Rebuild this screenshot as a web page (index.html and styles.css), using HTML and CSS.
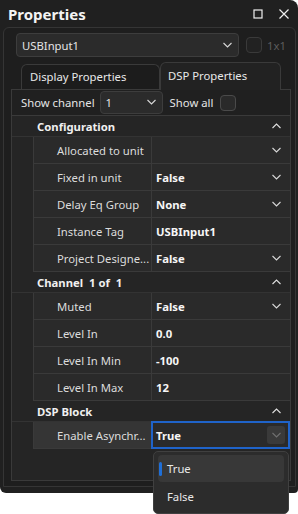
FILE: index.html
```html
<!DOCTYPE html>
<html lang="en">
<head>
    <meta charset="UTF-8">
    <title>Properties</title>
    <link rel="stylesheet" href="styles.css">
</head>
<body>
    <div class="window">
        <div class="titlebar">
            <span class="title">Properties</span>
            <svg class="win-btn" width="10" height="10" viewBox="0 0 10 10"><rect x="1" y="1" width="8" height="8" fill="none" stroke="#f0f0f0" stroke-width="1.2"/></svg>
            <svg class="win-btn close" width="12" height="12" viewBox="0 0 12 12"><path d="M1.5 1.5 L10.5 10.5 M10.5 1.5 L1.5 10.5" stroke="#f0f0f0" stroke-width="1.2"/></svg>
        </div>
        <div class="panel">
            <div class="top-row">
                <div class="combo">
                    <span>USBInput1</span>
                    <svg class="chev" width="9" height="6" viewBox="0 0 9 6"><path d="M0.5 1 L4.5 5 L8.5 1" fill="none" stroke="#d8d8d8" stroke-width="1.1"/></svg>
                </div>
                <div class="check disabled"></div>
                <span class="dim">1x1</span>
            </div>
            <div class="tabs">
                <div class="tab">Display Properties</div>
                <div class="tab active">DSP Properties</div>
            </div>
            <div class="tab-body">
                <div class="show-row">
                    <span>Show channel</span>
                    <div class="combo small">
                        <span>1</span>
                        <svg class="chev" width="9" height="6" viewBox="0 0 9 6"><path d="M0.5 1 L4.5 5 L8.5 1" fill="none" stroke="#d8d8d8" stroke-width="1.1"/></svg>
                    </div>
                    <span>Show all</span>
                    <div class="check"></div>
                </div>
                <div class="grid">
                    <div class="cat">
                        <span>Configuration</span>
                        <svg class="chev" width="9" height="6" viewBox="0 0 9 6"><path d="M0.5 5 L4.5 1 L8.5 5" fill="none" stroke="#e0e0e0" stroke-width="1.1"/></svg>
                    </div>
                    <div class="prop"><div class="name">Allocated to unit</div><div class="val"><span></span><svg class="chev" width="9" height="6" viewBox="0 0 9 6"><path d="M0.5 1 L4.5 5 L8.5 1" fill="none" stroke="#d8d8d8" stroke-width="1.1"/></svg></div></div>
                    <div class="prop"><div class="name">Fixed in unit</div><div class="val"><span>False</span><svg class="chev" width="9" height="6" viewBox="0 0 9 6"><path d="M0.5 1 L4.5 5 L8.5 1" fill="none" stroke="#d8d8d8" stroke-width="1.1"/></svg></div></div>
                    <div class="prop"><div class="name">Delay Eq Group</div><div class="val"><span>None</span><svg class="chev" width="9" height="6" viewBox="0 0 9 6"><path d="M0.5 1 L4.5 5 L8.5 1" fill="none" stroke="#d8d8d8" stroke-width="1.1"/></svg></div></div>
                    <div class="prop"><div class="name">Instance Tag</div><div class="val"><span>USBInput1</span></div></div>
                    <div class="prop"><div class="name">Project Designe...</div><div class="val"><span>False</span><svg class="chev" width="9" height="6" viewBox="0 0 9 6"><path d="M0.5 1 L4.5 5 L8.5 1" fill="none" stroke="#d8d8d8" stroke-width="1.1"/></svg></div></div>
                    <div class="cat">
                        <span>Channel&nbsp;&nbsp;1 of&nbsp;&nbsp;1</span>
                        <svg class="chev" width="9" height="6" viewBox="0 0 9 6"><path d="M0.5 5 L4.5 1 L8.5 5" fill="none" stroke="#e0e0e0" stroke-width="1.1"/></svg>
                    </div>
                    <div class="prop"><div class="name">Muted</div><div class="val"><span>False</span><svg class="chev" width="9" height="6" viewBox="0 0 9 6"><path d="M0.5 1 L4.5 5 L8.5 1" fill="none" stroke="#d8d8d8" stroke-width="1.1"/></svg></div></div>
                    <div class="prop"><div class="name">Level In</div><div class="val"><span>0.0</span></div></div>
                    <div class="prop"><div class="name">Level In Min</div><div class="val"><span>-100</span></div></div>
                    <div class="prop"><div class="name">Level In Max</div><div class="val"><span>12</span></div></div>
                    <div class="cat">
                        <span>DSP Block</span>
                        <svg class="chev" width="9" height="6" viewBox="0 0 9 6"><path d="M0.5 5 L4.5 1 L8.5 5" fill="none" stroke="#e0e0e0" stroke-width="1.1"/></svg>
                    </div>
                    <div class="prop selected"><div class="name">Enable Asynchr...</div><div class="val editing"><span>True</span><div class="drop-btn"><svg width="9" height="6" viewBox="0 0 9 6"><path d="M0.5 1 L4.5 5 L8.5 1" fill="none" stroke="#707070" stroke-width="1.1"/></svg></div></div></div>
                    <div class="filler"></div>
                </div>
            </div>
        </div>
        <div class="popup">
            <div class="item current">True</div>
            <div class="item">False</div>
        </div>
    </div>
</body>
</html>
```

FILE: styles.css
```css
html, body {
    height: 514px;
}
body {
    margin: 0;
    background-color: #ffffff;
    font-family: "Noto Sans", "Open Sans", sans-serif;
    font-size: 11.3px;
    color: #e4e4e4;
}
.window {
    position: relative;
    width: 298px;
    height: 493px;
    background-color: #202020;
    border-radius: 0 8px 4px 6px;
    box-sizing: border-box;
    padding-bottom: 6px;
    display: flex;
    flex-direction: column;
}
.titlebar {
    height: 27px;
    display: flex;
    align-items: center;
    padding: 0 8px 0 8px;
}
.title {
    font-size: 15px;
    font-weight: bold;
    color: #f4f4f4;
    flex: 1;
}
.win-btn {
    margin-left: 14px;
}
.win-btn.close {
    margin-left: 15px;
}
.panel {
    flex: 1;
    margin: 0 2px 0 3px;
    border: 1px solid #353535;
    border-radius: 6px 6px 0 0;
    padding-top: 5px;
    padding-bottom: 5px;
    display: flex;
    flex-direction: column;
    background-color: #1e1e1e;
}
.top-row {
    display: flex;
    align-items: center;
    padding-left: 12px;
    height: 24px;
}
.combo {
    width: 223px;
    height: 24px;
    box-sizing: border-box;
    background-color: #2b2b2b;
    border: 1px solid #3d3d3d;
    border-radius: 4px;
    display: flex;
    align-items: center;
    padding: 0 6px 0 5px;
}
.combo span {
    flex: 1;
}
.check {
    width: 16px;
    height: 16px;
    box-sizing: border-box;
    border: 1px solid #4a4a4a;
    border-radius: 4px;
    background-color: #2a2a2a;
}
.check.disabled {
    margin-left: 7px;
    border-color: #3a3a3a;
    background-color: #222;
}
.dim {
    color: #5c5c5c;
    margin-left: 5px;
}
.tabs {
    display: flex;
    align-items: flex-end;
    margin-top: 5px;
    padding-left: 17px;
    height: 27px;
}
.tab {
    height: 25px;
    box-sizing: border-box;
    border: 1px solid #3a3a3a;
    border-bottom: none;
    border-radius: 6px 6px 0 0;
    padding: 4px 0 0 8px;
    width: 139px;
    color: #e8e8e8;
    background-color: #1c1c1c;
}
.tab.active {
    height: 28px;
    width: 121px;
    padding-left: 7px;
    padding-top: 5px;
    background-color: #222222;
    position: relative;
    top: 1px;
}
.tab-body {
    flex: 1;
    margin: 0 4px 0 7px;
    border: 1px solid #3a3a3a;
    display: flex;
    flex-direction: column;
    background-color: #202020;
}
.show-row {
    height: 25px;
    display: flex;
    align-items: center;
    padding-left: 9px;
}
.combo.small {
    width: 63px;
    height: 23px;
    margin: 0 7px 1px 5px;
}
.show-row .check {
    margin-left: 7px;
}
.grid {
    flex: 1;
    border-top: 1px solid #3a3a3a;
    background-color: #252525;
    display: flex;
    flex-direction: column;
}
.cat {
    height: 21px;
    flex-shrink: 0;
    display: flex;
    align-items: center;
    padding: 0 9px 0 25px;
    font-weight: bold;
    color: #f0f0f0;
    border-bottom: 1px solid #333333;
    box-sizing: border-box;
}
.cat span {
    flex: 1;
}
.prop {
    height: 27px;
    flex-shrink: 0;
    margin-left: 21px;
    display: flex;
    box-sizing: border-box;
    border-bottom: 1px solid #3a3a3a;
    border-left: 1px solid #3a3a3a;
    background-color: #2a2a2a;
}
.name {
    box-sizing: border-box;
    width: 118px;
    padding-left: 23px;
    border-right: 1px solid #3a3a3a;
    display: flex;
    align-items: center;
    white-space: nowrap;
    color: #dcdcdc;
}
.val {
    flex: 1;
    display: flex;
    align-items: center;
    padding: 0 9px 0 4px;
    font-weight: bold;
    color: #f6f6f6;
}
.val span {
    flex: 1;
}
.prop.selected .name {
    background-color: #353535;
}
.val.editing {
    border: 2px solid #1f63c9;
    margin: -1px 0 -1px -1px;
    padding: 0 3px 0 3px;
}
.drop-btn {
    width: 18px;
    height: 18px;
    border-radius: 3px;
    background-color: #3a3a3a;
    display: flex;
    align-items: center;
    justify-content: center;
}
.filler {
    flex: 1;
}
.popup {
    position: absolute;
    z-index: 10;
    left: 153px;
    top: 451px;
    width: 136px;
    height: 63px;
    box-sizing: border-box;
    background-color: #2c2c2c;
    border: 1px solid #404040;
    border-radius: 5px;
    padding: 3px 4px;
}
.item {
    height: 27px;
    display: flex;
    align-items: center;
    padding-left: 9px;
    border-radius: 4px;
    color: #e8e8e8;
    margin-bottom: 1px;
}
.item.current {
    background-color: #383838;
    position: relative;
}
.item.current::before {
    content: "";
    position: absolute;
    left: 1px;
    top: 7px;
    width: 3px;
    height: 14px;
    border-radius: 2px;
    background-color: #1f6fd8;
}
```
